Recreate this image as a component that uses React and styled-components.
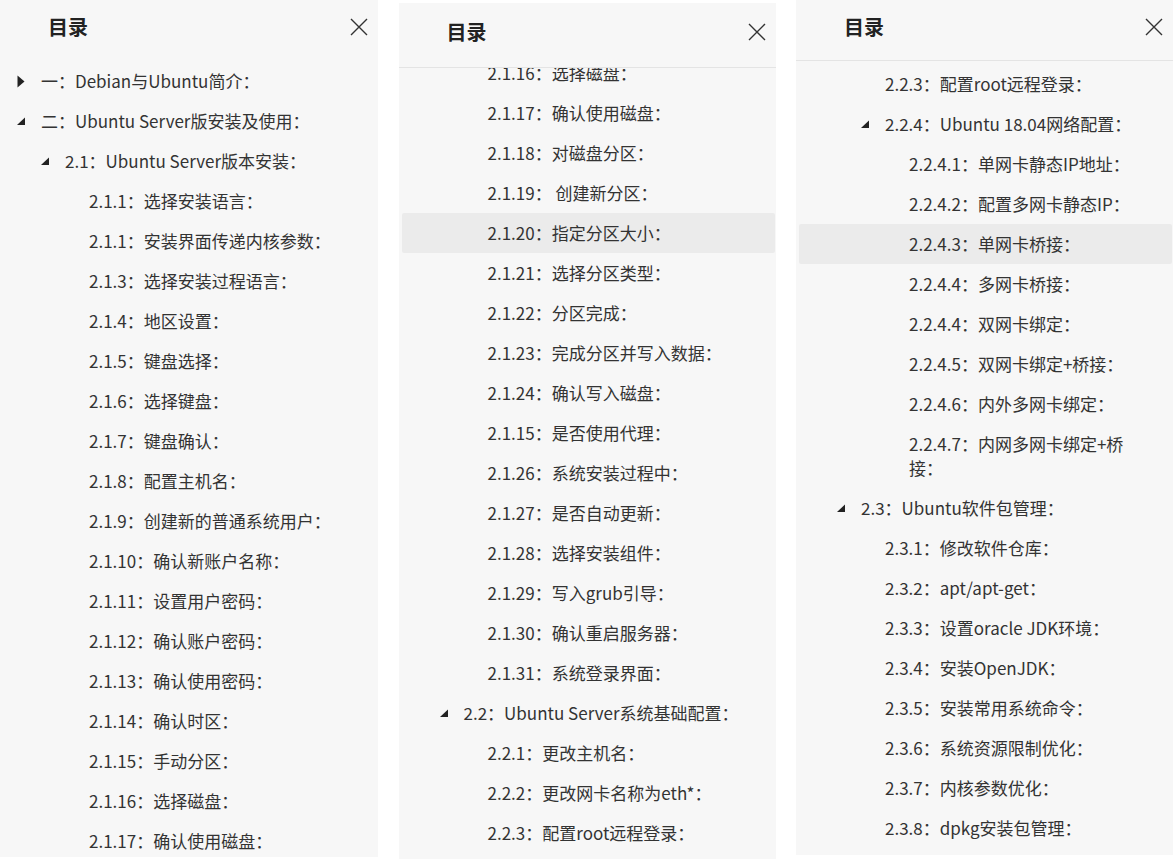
import React from "react";
import styled, { createGlobalStyle } from "styled-components";

const toc = [
    { level: 0, text: "一：Debian与Ubuntu简介：", caret: "closed" },
    { level: 0, text: "二：Ubuntu Server版安装及使用：", caret: "open" },
    { level: 1, text: "2.1：Ubuntu Server版本安装：", caret: "open" },
    { level: 2, text: "2.1.1：选择安装语言：" },
    { level: 2, text: "2.1.1：安装界面传递内核参数：" },
    { level: 2, text: "2.1.3：选择安装过程语言：" },
    { level: 2, text: "2.1.4：地区设置：" },
    { level: 2, text: "2.1.5：键盘选择：" },
    { level: 2, text: "2.1.6：选择键盘：" },
    { level: 2, text: "2.1.7：键盘确认：" },
    { level: 2, text: "2.1.8：配置主机名：" },
    { level: 2, text: "2.1.9：创建新的普通系统用户：" },
    { level: 2, text: "2.1.10：确认新账户名称：" },
    { level: 2, text: "2.1.11：设置用户密码：" },
    { level: 2, text: "2.1.12：确认账户密码：" },
    { level: 2, text: "2.1.13：确认使用密码：" },
    { level: 2, text: "2.1.14：确认时区：" },
    { level: 2, text: "2.1.15：手动分区：" },
    { level: 2, text: "2.1.16：选择磁盘：" },
    { level: 2, text: "2.1.17：确认使用磁盘：" },
    { level: 2, text: "2.1.18：对磁盘分区：" },
    { level: 2, text: "2.1.19： 创建新分区：" },
    { level: 2, text: "2.1.20：指定分区大小：", id: "2120" },
    { level: 2, text: "2.1.21：选择分区类型：" },
    { level: 2, text: "2.1.22：分区完成：" },
    { level: 2, text: "2.1.23：完成分区并写入数据：" },
    { level: 2, text: "2.1.24：确认写入磁盘：" },
    { level: 2, text: "2.1.15：是否使用代理：" },
    { level: 2, text: "2.1.26：系统安装过程中：" },
    { level: 2, text: "2.1.27：是否自动更新：" },
    { level: 2, text: "2.1.28：选择安装组件：" },
    { level: 2, text: "2.1.29：写入grub引导：" },
    { level: 2, text: "2.1.30：确认重启服务器：" },
    { level: 2, text: "2.1.31：系统登录界面：" },
    { level: 1, text: "2.2：Ubuntu Server系统基础配置：", caret: "open" },
    { level: 2, text: "2.2.1：更改主机名：" },
    { level: 2, text: "2.2.2：更改网卡名称为eth*：" },
    { level: 2, text: "2.2.3：配置root远程登录：" },
    { level: 2, text: "2.2.4：Ubuntu 18.04网络配置：", caret: "open" },
    { level: 3, text: "2.2.4.1：单网卡静态IP地址：" },
    { level: 3, text: "2.2.4.2：配置多网卡静态IP：" },
    { level: 3, text: "2.2.4.3：单网卡桥接：", id: "22443" },
    { level: 3, text: "2.2.4.4：多网卡桥接：" },
    { level: 3, text: "2.2.4.4：双网卡绑定：" },
    { level: 3, text: "2.2.4.5：双网卡绑定+桥接：" },
    { level: 3, text: "2.2.4.6：内外多网卡绑定：" },
    { level: 3, text: "2.2.4.7：内网多网卡绑定+桥接：" },
    { level: 1, text: "2.3：Ubuntu软件包管理：", caret: "open" },
    { level: 2, text: "2.3.1：修改软件仓库：" },
    { level: 2, text: "2.3.2：apt/apt-get：" },
    { level: 2, text: "2.3.3：设置oracle JDK环境：" },
    { level: 2, text: "2.3.4：安装OpenJDK：" },
    { level: 2, text: "2.3.5：安装常用系统命令：" },
    { level: 2, text: "2.3.6：系统资源限制优化：" },
    { level: 2, text: "2.3.7：内核参数优化：" },
    { level: 2, text: "2.3.8：dpkg安装包管理：" },
];

const panels = [
    { width: 378, top: 0, height: 857, headerHeight: 61, divider: false, scroll: 0, active: null },
    { width: 377, top: 3, height: 856, headerHeight: 65, divider: true, scroll: 735, active: "2120" },
    { width: 377, top: 0, height: 855, headerHeight: 61, divider: true, scroll: 1477, active: "22443" },
];

function Caret({ type }) {
    if (type === "closed") {
        return (
            <svg width="8" height="13" viewBox="0 0 8 13">
                <path d="M0.5 0.5 L7.5 6.5 L0.5 12.5 Z" fill="#222" />
            </svg>
        );
    }
    return (
        <svg width="8" height="8" viewBox="0 0 8 8">
            <path d="M8 0.5 L8 8 L0 8 Z" fill="#222" />
        </svg>
    );
}

function CloseIcon() {
    return (
        <svg width="18" height="18" viewBox="0 0 18 18">
            <path d="M1 1 L17 17 M17 1 L1 17" stroke="#333" strokeWidth="1.4" fill="none" />
        </svg>
    );
}

function TocPanel({ panel }) {
    const bodyRef = React.useRef(null);
    React.useLayoutEffect(() => {
        if (bodyRef.current) bodyRef.current.scrollTop = panel.scroll;
    }, [panel.scroll]);
    return (
        <Panel $width={panel.width} $top={panel.top} $height={panel.height}>
            <Header $height={panel.headerHeight} $divider={panel.divider}>
                <Title>目录</Title>
                <CloseButton type="button" aria-label="关闭">
                    <CloseIcon />
                </CloseButton>
            </Header>
            <Body ref={bodyRef}>
                <List>
                    {toc.map((item, i) => (
                        <Row key={i} $level={item.level} $active={item.id && item.id === panel.active}>
                            <CaretBox>{item.caret && <Caret type={item.caret} />}</CaretBox>
                            <Label>{item.text}</Label>
                        </Row>
                    ))}
                </List>
            </Body>
        </Panel>
    );
}

export default function App() {
    return (
        <>
            <GlobalStyle />
            <Page>
                {panels.map((p, i) => (
                    <TocPanel key={i} panel={p} />
                ))}
            </Page>
        </>
    );
}

const GlobalStyle = createGlobalStyle`
    html, body {
        margin: 0;
        padding: 0;
        background: #fff;
    }
    body {
        font-family: "Noto Sans CJK SC", "Noto Sans", sans-serif;
        color: #333;
    }
`;

const Page = styled.div`
    display: flex;
    align-items: flex-start;
    justify-content: space-between;
    width: 1173px;
    height: 859px;
    overflow: hidden;
`;

const Panel = styled.aside`
    flex-shrink: 0;
    width: ${(p) => p.$width}px;
    height: ${(p) => p.$height}px;
    margin-top: ${(p) => p.$top}px;
    background: #f7f7f7;
    display: flex;
    flex-direction: column;
`;

const Header = styled.header`
    flex-shrink: 0;
    box-sizing: border-box;
    height: ${(p) => p.$height}px;
    display: flex;
    align-items: center;
    justify-content: space-between;
    padding: 0 10px 7px 48px;
    border-bottom: 1px solid ${(p) => (p.$divider ? "#e4e4e4" : "transparent")};
`;

const Title = styled.h2`
    margin: 0;
    font-size: 20px;
    font-weight: 700;
    color: #222;
    line-height: 28px;
`;

const CloseButton = styled.button`
    border: 0;
    padding: 0;
    background: none;
    width: 18px;
    height: 18px;
    display: flex;
    cursor: pointer;
`;

const Body = styled.div`
    flex: 1;
    overflow: hidden;
`;

const List = styled.ul`
    list-style: none;
    margin: 0;
    padding: 0 0 24px;
`;

const Row = styled.li`
    display: flex;
    align-items: flex-start;
    margin: 0 1px 0 3px;
    padding: 8px 30px 8px ${(p) => 14 + p.$level * 24}px;
    border-radius: 2px;
    background: ${(p) => (p.$active ? "#ebebeb" : "transparent")};
    font-size: 17px;
    line-height: 24px;
    color: #333;
`;

const CaretBox = styled.span`
    flex-shrink: 0;
    width: 24px;
    height: 24px;
    display: flex;
    align-items: center;
`;

const Label = styled.span`
    flex: 1;
    min-width: 0;
`;
